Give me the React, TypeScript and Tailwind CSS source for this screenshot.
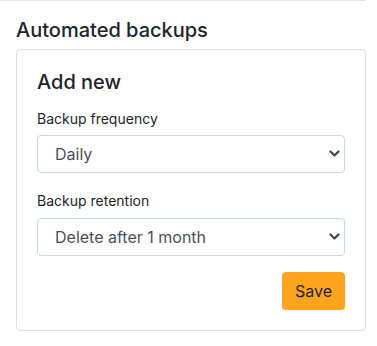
import React from "react";

function Chevron() {
  return (
    <svg
      className="pointer-events-none absolute right-[5px] top-[15px]"
      width="11"
      height="7"
      viewBox="0 0 11 7"
    >
      <path
        d="M1.5 1.5l4 4 4-4"
        fill="none"
        stroke="#3f444a"
        strokeWidth="2.2"
        strokeLinecap="round"
        strokeLinejoin="round"
      />
    </svg>
  );
}

function Select({ options }: { options: string[] }) {
  return (
    <div className="relative">
      <select className="block h-[38px] w-full appearance-none rounded-[4px] border border-[#ced4da] bg-white pl-[17px] pr-9 text-[16px] text-[#495057] outline-none">
        {options.map((o) => (
          <option key={o}>{o}</option>
        ))}
      </select>
      <Chevron />
    </div>
  );
}

export default function App() {
  return (
    <div className="w-[377px] bg-white font-['Inter',sans-serif] text-[#212529]">
      <div className="w-[366px] border-t border-[#e3e6ea] pl-4 pt-[17px]">
        <h5 className="mb-[7px] text-[20px] font-medium leading-[24px]">
          Automated backups
        </h5>
        <div className="rounded-[4px] border border-[#dcdfe3] px-5 pt-5 pb-5">
          <h5 className="mb-[14px] text-[20px] font-medium leading-[24px]">
            Add new
          </h5>
          <label className="mb-[6px] block text-[14px] leading-[21px]">
            Backup frequency
          </label>
          <Select options={["Daily", "Weekly", "Monthly"]} />
          <label className="mb-[7px] mt-[17px] block text-[14px] leading-[21px]">
            Backup retention
          </label>
          <Select
            options={[
              "Delete after 1 month",
              "Delete after 3 months",
              "Never delete",
            ]}
          />
          <div className="mt-4 flex justify-end">
            <button className="h-[38px] w-[63px] rounded-[4px] bg-[#ffa41f] text-[16px] text-[#212529]">
              Save
            </button>
          </div>
        </div>
      </div>
    </div>
  );
}
